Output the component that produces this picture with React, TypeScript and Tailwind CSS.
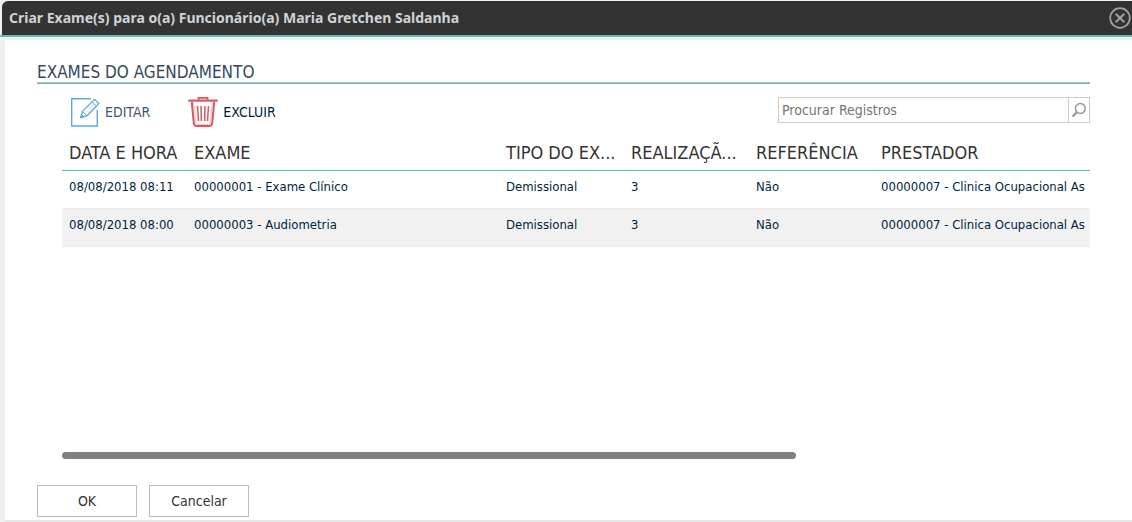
import React from 'react';

interface Exame {
  data: string;
  exame: string;
  tipo: string;
  realizacao: string;
  referencia: string;
  prestador: string;
}

const exames: Exame[] = [
  {
    data: '08/08/2018 08:11',
    exame: '00000001 - Exame Clínico',
    tipo: 'Demissional',
    realizacao: '3',
    referencia: 'Não',
    prestador: '00000007 - Clinica Ocupacional As',
  },
  {
    data: '08/08/2018 08:00',
    exame: '00000003 - Audiometria',
    tipo: 'Demissional',
    realizacao: '3',
    referencia: 'Não',
    prestador: '00000007 - Clinica Ocupacional As',
  },
];

const colunas = ['DATA E HORA', 'EXAME', 'TIPO DO EX...', 'REALIZAÇÃ...', 'REFERÊNCIA', 'PRESTADOR'];

const CloseIcon = () => (
  <svg width="22" height="22" viewBox="0 0 22 22" fill="none" stroke="#a3a3a3" aria-hidden="true">
    <circle cx="11" cy="11" r="9.8" strokeWidth="1.7" />
    <path d="M6.7 6.7l8.6 8.6M15.3 6.7l-8.6 8.6" strokeWidth="2" />
  </svg>
);

const EditIcon = () => (
  <svg width="30" height="30" viewBox="0 0 30 30" fill="none" stroke="#5aa9e6" aria-hidden="true">
    <path d="M21 1.7H1.7V29H27.3V13" strokeWidth="1.4" />
    <path d="M10.8 20.5l1.6-6L24.5 2.3l4.4 4.2-12 12.3z" strokeWidth="1.3" />
    <path d="M12.4 14.5l4.5 4.3M22 4.8l4.5 4.3" strokeWidth="1" />
    <path d="M14.8 16.6L24.2 7" strokeWidth="0.8" opacity="0.5" />
    <path d="M10.8 20.5l.8-2.9 2.1 2.1z" fill="#5aa9e6" />
  </svg>
);

const TrashIcon = () => (
  <svg width="30" height="30" viewBox="0 0 30 30" fill="none" stroke="#dc5560" aria-hidden="true">
    <path d="M10.5 3.5V.9h9v2.6" strokeWidth="1.8" />
    <path d="M.3 3.6h29.4" strokeWidth="2.2" />
    <path d="M3.8 5l2 21.2Q6 29 8.8 29h12.4q2.7 0 3-2.8L26.2 5" strokeWidth="2" />
    <path d="M5.7 5l2 20.5q.2 1.9 1.8 1.9h11q1.6 0 1.8-1.9L24.3 5" strokeWidth="0.6" opacity="0.6" />
    <path d="M9.5 9l1 15M13 9l.3 15M17 9l-.3 15M20.5 9l-1 15" strokeWidth="1.5" />
  </svg>
);

const SearchIcon = () => (
  <svg width="16" height="16" viewBox="0 0 16 16" fill="none" stroke="#969696" aria-hidden="true">
    <circle cx="9.3" cy="6.5" r="4.9" strokeWidth="1.5" />
    <path d="M5.8 10.2L1.6 14.6" strokeWidth="2.2" />
  </svg>
);

const App: React.FC = () => {
  return (
    <div className="flex min-h-screen flex-col bg-[#f0f0f0] font-['Tahoma','DejaVu_Sans_Condensed','DejaVu_Sans',sans-serif] text-sm text-[#001f3f]">
      {/* Title bar */}
      <header className="border-b-2 border-[#5cc2b0] pl-0.5 pt-px">
        <div className="flex h-[34px] items-center justify-between rounded-tl-md bg-[#333] pl-[7px] pr-px">
          <h1 className="font-['Tahoma','Noto_Sans',sans-serif] text-sm font-bold text-[#cfd3d8]">
            Criar Exame(s) para o(a) Funcionário(a) Maria Gretchen Saldanha
          </h1>
          <button type="button" aria-label="Fechar">
            <CloseIcon />
          </button>
        </div>
      </header>

      <main className="mt-[3px] ml-[5px] flex flex-1 flex-col border-b-2 border-[#e6e6e6] bg-white pl-8 pr-[42px] pt-5 pb-[3px]">
        <h2 className="border-b border-[#5cc2b0] text-[17px] leading-6 text-[#34495e]">
          <span className="block h-[23px] border-b border-[#bbb]">EXAMES DO AGENDAMENTO</span>
        </h2>

        <section className="ml-[25px] flex flex-1 flex-col">
          {/* Toolbar */}
          <div className="flex items-start justify-between pt-[13px] pl-2">
            <div className="flex gap-[38px]">
              <button type="button" className="flex items-center gap-[5px] text-[#43566e]">
                <EditIcon />
                EDITAR
              </button>
              <button type="button" className="flex items-center gap-[5px]">
                <TrashIcon />
                EXCLUIR
              </button>
            </div>
            <form className="flex h-[26px] w-[312px] border border-[#ccc]">
              <input
                type="text"
                aria-label="Procurar Registros"
                placeholder="Procurar Registros"
                className="min-w-0 flex-1 px-[3px] outline-none placeholder:text-[#757575]"
              />
              <button
                type="button"
                aria-label="Procurar"
                className="flex w-[21px] items-center justify-center border-l border-[#ccc]"
              >
                <SearchIcon />
              </button>
            </form>
          </div>

          {/* Records */}
          <div className="flex-1 overflow-hidden pt-[7px]">
            <table className="w-[1436px] table-fixed border-collapse text-left">
              <colgroup>
                <col className="w-[125px]" />
                <col className="w-[312px]" />
                <col className="w-[125px]" />
                <col className="w-[125px]" />
                <col className="w-[125px]" />
                <col />
              </colgroup>
              <thead>
                <tr className="h-9 border-b border-[#5cc2b0] text-lg text-[#333]">
                  {colunas.map((coluna) => (
                    <th key={coluna} className="whitespace-nowrap pt-0.5 pl-[7px] font-normal">
                      {coluna}
                    </th>
                  ))}
                </tr>
              </thead>
              <tbody className="text-[13px]">
                {exames.map((item) => (
                  <tr key={item.data} className="h-[38px] border-b border-[#ebebeb] even:bg-[#f1f1f1]">
                    <td className="whitespace-nowrap pb-1 pl-[7px]">{item.data}</td>
                    <td className="whitespace-nowrap pb-1 pl-[7px]">{item.exame}</td>
                    <td className="whitespace-nowrap pb-1 pl-[7px]">{item.tipo}</td>
                    <td className="whitespace-nowrap pb-1 pl-[7px]">{item.realizacao}</td>
                    <td className="whitespace-nowrap pb-1 pl-[7px]">{item.referencia}</td>
                    <td className="whitespace-nowrap pb-1 pl-[7px]">{item.prestador}</td>
                  </tr>
                ))}
              </tbody>
            </table>
          </div>
          <div className="h-[7px] w-5/7 rounded-full bg-[#808080]" />
        </section>

        <footer className="mt-[26px] flex gap-3 text-[#333]">
          <button type="button" className="h-8 w-[100px] border border-[#bbb]">
            OK
          </button>
          <button type="button" className="h-8 w-[100px] border border-[#bbb]">
            Cancelar
          </button>
        </footer>
      </main>
    </div>
  );
};

export default App;
